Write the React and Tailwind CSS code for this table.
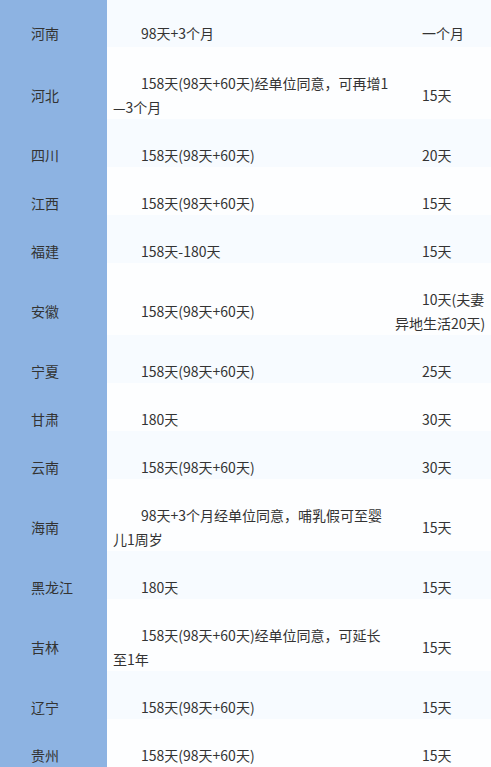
import React from "react";

const rows = [
  { p: "河南", days: "98天+3个月", extra: "一个月" },
  { p: "河北", days: "158天(98天+60天)经单位同意，可再增1—3个月", extra: "15天" },
  { p: "四川", days: "158天(98天+60天)", extra: "20天" },
  { p: "江西", days: "158天(98天+60天)", extra: "15天" },
  { p: "福建", days: "158天-180天", extra: "15天" },
  { p: "安徽", days: "158天(98天+60天)", extra: "10天(夫妻异地生活20天)" },
  { p: "宁夏", days: "158天(98天+60天)", extra: "25天" },
  { p: "甘肃", days: "180天", extra: "30天" },
  { p: "云南", days: "158天(98天+60天)", extra: "30天" },
  { p: "海南", days: "98天+3个月经单位同意，哺乳假可至婴儿1周岁", extra: "15天" },
  { p: "黑龙江", days: "180天", extra: "15天" },
  { p: "吉林", days: "158天(98天+60天)经单位同意，可延长至1年", extra: "15天" },
  { p: "辽宁", days: "158天(98天+60天)", extra: "15天" },
  { p: "贵州", days: "158天(98天+60天)", extra: "15天" },
];

export default function App() {
  return (
    <div
      className="w-[491px] h-[767px] overflow-hidden bg-white text-[14px] leading-[24px] text-[#333]"
      style={{ fontFamily: '"Noto Sans CJK SC", "Noto Sans", sans-serif' }}
    >
      <div className="grid grid-cols-[107px_282px_102px]">
        {rows.map((r, i) => {
          const band = i % 2 === 0 ? "bg-[#f7fbff]" : "bg-[#fdfeff]";
          // first row is cut off at the top of the picture
          const pad = i === 0 ? "pt-[21px] pb-[2px]" : "pt-6";
          return (
            <React.Fragment key={r.p}>
              <div className={`bg-[#8db3e2] flex items-center pl-[31px] ${i === 0 ? "h-[47px]" : ""}`}>
                <p className={pad}>{r.p}</p>
              </div>
              <div className={`${band} flex items-center pl-[6px] ${i === 0 ? "h-[47px]" : ""}`}>
                <p className={`${pad} indent-[28px]`}>{r.days}</p>
              </div>
              <div className={`${band} flex items-center pl-[6px] ${i === 0 ? "h-[47px]" : ""}`}>
                <p className={`${pad} indent-[27px]`}>{r.extra}</p>
              </div>
            </React.Fragment>
          );
        })}
      </div>
    </div>
  );
}
